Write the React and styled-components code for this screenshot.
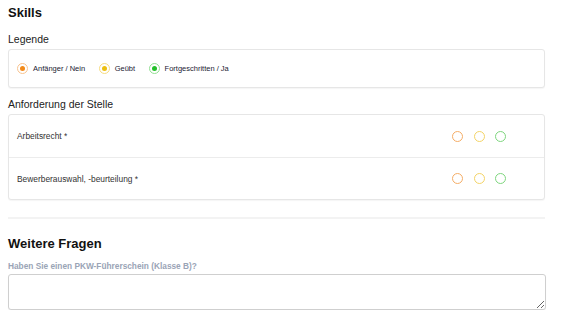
import React from "react";
import styled, { createGlobalStyle } from "styled-components";

const Global = createGlobalStyle`
  html, body { margin: 0; padding: 0; background: #fff; }
  body { font-family: "Liberation Sans", Arial, sans-serif; color: #222; }
  * { box-sizing: border-box; }
`;

const Page = styled.div`
  width: 564px;
  padding: 5px 19px 0 8px;
  display: flex;
  flex-direction: column;
`;

const Heading = styled.h2`
  margin: 0;
  font-size: 13px;
  line-height: 16px;
  font-weight: 700;
  color: #111;
`;

const SubHeading = styled.h3`
  margin: ${(p) => p.$top}px 0 3px;
  font-size: 10.5px;
  line-height: 14px;
  font-weight: 400;
  color: #222;
`;

const Card = styled.div`
  border: 1px solid #e6e6e6;
  border-radius: 3px;
  background: #fff;
  box-shadow: 0 1px 1px rgba(0, 0, 0, 0.04);
`;

const LegendRow = styled.div`
  display: flex;
  align-items: center;
  gap: 13.5px;
  padding: 13px 8px;
`;

const LegendItem = styled.div`
  display: flex;
  align-items: center;
  gap: 5px;
  font-size: 7.5px;
  line-height: 11px;
  color: #1c2233;
`;

const Dot = styled.span`
  width: 11px;
  height: 11px;
  border-radius: 50%;
  border: 1.5px solid ${(p) => p.$ring};
  display: flex;
  align-items: center;
  justify-content: center;
  &::after {
    content: "";
    width: 5px;
    height: 5px;
    border-radius: 50%;
    background: ${(p) => p.$fill};
  }
`;

const SkillRow = styled.div`
  height: 42px;
  display: flex;
  align-items: center;
  justify-content: space-between;
  padding: 0 38px 0 8px;
  & + & {
    border-top: 1px solid #ececec;
  }
`;

const SkillName = styled.span`
  font-size: 8.4px;
  color: #333;
`;

const Options = styled.div`
  display: flex;
  gap: 10.5px;
`;

const Ring = styled.span`
  width: 11px;
  height: 11px;
  border-radius: 50%;
  border: 1.3px solid ${(p) => p.$color};
`;

const Divider = styled.hr`
  margin: 17px 0 17px;
  border: 0;
  height: 2px;
  background: #f3f3f3;
`;

const Label = styled.label`
  margin: 9px 0 3px;
  font-size: 8.3px;
  line-height: 10px;
  font-weight: 700;
  color: #9aa4b6;
`;

const TextArea = styled.textarea`
  width: 538px;
  height: 36px;
  border: 1px solid #cfcfcf;
  border-radius: 3px;
  font-family: inherit;
  font-size: 8px;
  padding: 4px;
  box-shadow: 0 1px 1px rgba(0, 0, 0, 0.05);
  outline: none;
  display: block;
`;

const levels = [
  { label: "Anfänger / Nein", ring: "#f9c38e", fill: "#f28a1a", outline: "#f5ad66" },
  { label: "Geübt", ring: "#f7dc80", fill: "#ecbf10", outline: "#f4d466" },
  { label: "Fortgeschritten / Ja", ring: "#93e093", fill: "#22c02a", outline: "#7ed67e" },
];

const skills = ["Arbeitsrecht *", "Bewerberauswahl, -beurteilung *"];

export default function App() {
  return (
    <>
      <Global />
      <Page>
        <Heading>Skills</Heading>
        <SubHeading $top={11}>Legende</SubHeading>
        <Card>
          <LegendRow>
            {levels.map((l) => (
              <LegendItem key={l.label}>
                <Dot $ring={l.ring} $fill={l.fill} />
                {l.label}
              </LegendItem>
            ))}
          </LegendRow>
        </Card>
        <SubHeading $top={9}>Anforderung der Stelle</SubHeading>
        <Card>
          {skills.map((s) => (
            <SkillRow key={s}>
              <SkillName>{s}</SkillName>
              <Options>
                {levels.map((l) => (
                  <Ring key={l.label} $color={l.outline} />
                ))}
              </Options>
            </SkillRow>
          ))}
        </Card>
        <Divider />
        <Heading>Weitere Fragen</Heading>
        <Label>Haben Sie einen PKW-Führerschein (Klasse B)?</Label>
        <TextArea />
      </Page>
    </>
  );
}
